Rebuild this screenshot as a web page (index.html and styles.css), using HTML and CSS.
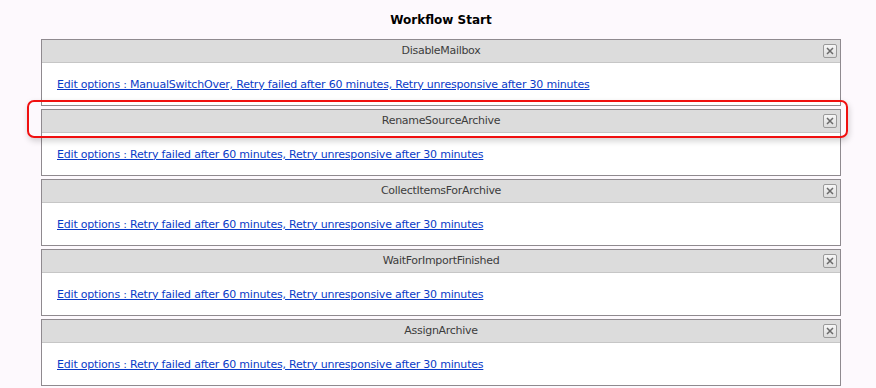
FILE: index.html
```html
<!DOCTYPE html>
<html lang="en">
<head>
  <meta charset="UTF-8" />
  <title>Workflow Start</title>
  <link rel="stylesheet" href="styles.css">
</head>
<body>
  <div id="workflow">
    <h1 class="title">Workflow Start</h1>

    <div class="steps">
      <div class="step">
        <div class="step-head">DisableMailbox<button class="close"><svg viewBox="0 0 8 8" width="8" height="8"><path d="M1 1L7 7M7 1L1 7"/></svg></button></div>
        <div class="step-body"><a href="#">Edit options : ManualSwitchOver, Retry failed after 60 minutes, Retry unresponsive after 30 minutes</a></div>
      </div>

      <div class="step">
        <div class="step-head">RenameSourceArchive<button class="close"><svg viewBox="0 0 8 8" width="8" height="8"><path d="M1 1L7 7M7 1L1 7"/></svg></button></div>
        <div class="step-body"><a href="#">Edit options : Retry failed after 60 minutes, Retry unresponsive after 30 minutes</a></div>
      </div>

      <div class="step">
        <div class="step-head">CollectItemsForArchive<button class="close"><svg viewBox="0 0 8 8" width="8" height="8"><path d="M1 1L7 7M7 1L1 7"/></svg></button></div>
        <div class="step-body"><a href="#">Edit options : Retry failed after 60 minutes, Retry unresponsive after 30 minutes</a></div>
      </div>

      <div class="step">
        <div class="step-head">WaitForImportFinished<button class="close"><svg viewBox="0 0 8 8" width="8" height="8"><path d="M1 1L7 7M7 1L1 7"/></svg></button></div>
        <div class="step-body"><a href="#">Edit options : Retry failed after 60 minutes, Retry unresponsive after 30 minutes</a></div>
      </div>

      <div class="step">
        <div class="step-head">AssignArchive<button class="close"><svg viewBox="0 0 8 8" width="8" height="8"><path d="M1 1L7 7M7 1L1 7"/></svg></button></div>
        <div class="step-body"><a href="#">Edit options : Retry failed after 60 minutes, Retry unresponsive after 30 minutes</a></div>
      </div>

      <!-- highlight drawn over the second step -->
      <div class="highlight"></div>
    </div>
  </div>
</body>
</html>
```

FILE: styles.css
```css
html, body {
  margin: 0;
  padding: 0;
  background-color: #fdf9fd;
  font-family: 'DejaVu Sans', Verdana, sans-serif;
}
#workflow {
  width: 800px;
  margin-left: 41px;
  padding-top: 11px;
}
.title {
  margin: 0 0 10px 0;
  height: 18px;
  line-height: 18px;
  font-size: 12px;
  font-weight: bold;
  text-align: center;
  color: #000;
}
.steps {
  position: relative;
  display: flex;
  flex-direction: column;
  gap: 3px;
}
.step {
  border: 1px solid #8f8a8f;
  background: #fff;
}
.step-head {
  position: relative;
  height: 22px;
  line-height: 22px;
  background: #dcdcdc;
  border-bottom: 1px solid #c6c6c6;
  text-align: center;
  font-size: 11px;
  letter-spacing: -0.3px;
  color: #3c3c3c;
}
.close {
  position: absolute;
  top: 4px;
  right: 3px;
  width: 14px;
  height: 14px;
  padding: 0;
  display: flex;
  align-items: center;
  justify-content: center;
  border: 1px solid #9a9a9a;
  border-radius: 2px;
  background: linear-gradient(#f6f6f6, #dcdcdc);
  cursor: pointer;
}
.close svg {
  stroke: #6a6a6a;
  stroke-width: 1.5;
  fill: none;
}
.step-body {
  height: 42px;
  display: flex;
  align-items: center;
  padding-left: 15px;
}
.step-body a {
  color: #0a3bc8;
  font-size: 11px;
  letter-spacing: -0.2px;
  text-decoration: underline;
}
.highlight {
  position: absolute;
  left: -14px;
  top: 61px;
  width: 817px;
  height: 34px;
  border: 2px solid #f01010;
  border-radius: 7px;
  box-shadow: 1px 3px 6px rgba(0, 0, 0, 0.18);
  pointer-events: none;
}
```
